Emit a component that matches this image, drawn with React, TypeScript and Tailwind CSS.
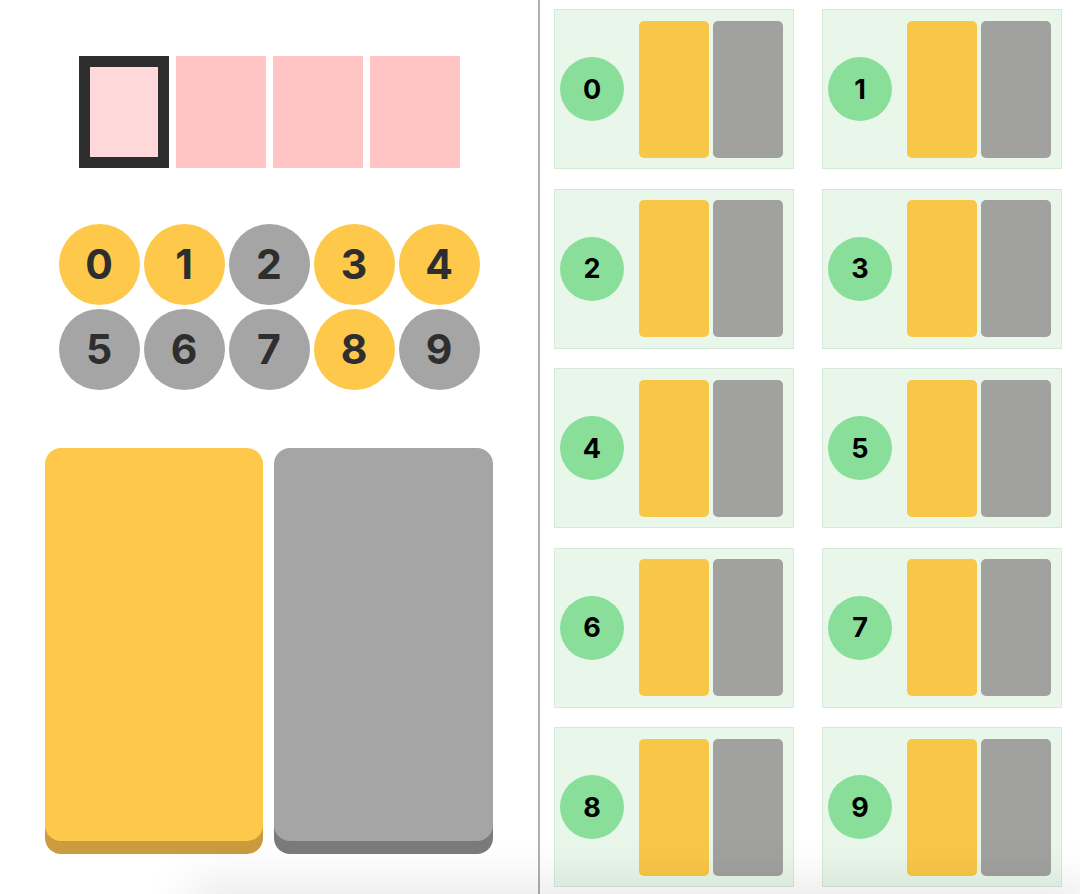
const DIGITS = [0, 1, 2, 3, 4, 5, 6, 7, 8, 9];
const LIT = [0, 1, 3, 4, 8];

function Slots() {
  return (
    <div className="flex gap-[7px]">
      <div className="w-[90px] h-[112px] border-[11px] border-[#2e2e2e] bg-[#ffd9d9]" />
      <div className="w-[90px] h-[112px] bg-[#ffc4c4]" />
      <div className="w-[90px] h-[112px] bg-[#ffc4c4]" />
      <div className="w-[90px] h-[112px] bg-[#ffc4c4]" />
    </div>
  );
}

function DigitPad() {
  return (
    <div className="grid grid-cols-5 gap-[4px]">
      {DIGITS.map((d) => (
        <div
          key={d}
          className={
            "w-[81px] h-[81px] rounded-full flex items-center justify-center text-[41px] font-bold text-[#2e2e2e] leading-none " +
            (LIT.includes(d) ? "bg-[#fec94b]" : "bg-[#a5a5a5]")
          }
        >
          {d}
        </div>
      ))}
    </div>
  );
}

function Levers() {
  return (
    <div className="flex gap-[11px]">
      <div className="w-[218px] h-[393px] rounded-[16px] bg-[#fec94b] shadow-[0_13px_0_#ca9c3f]" />
      <div className="w-[219px] h-[393px] rounded-[16px] bg-[#a5a5a5] shadow-[0_13px_0_#7b7b7b]" />
    </div>
  );
}

function DigitCard({ digit }: { digit: number }) {
  return (
    <div className="w-[240px] h-[160px] border border-[#d5e8d9] bg-[#e8f7ea] flex items-center pl-[5px] pr-[10px]">
      <div className="w-[64px] h-[64px] rounded-full bg-[#89df9a] flex items-center justify-center text-[27px] font-bold text-black leading-none">
        {digit}
      </div>
      <div className="ml-auto flex gap-[4px]">
        <div className="w-[70px] h-[137px] rounded-[5px] bg-[#f9c748]" />
        <div className="w-[70px] h-[137px] rounded-[5px] bg-[#a1a29f]" />
      </div>
    </div>
  );
}

export default function App() {
  return (
    <div className="relative w-[1080px] h-[894px] overflow-hidden bg-white flex font-['Inter','Noto_Sans',sans-serif]">
      <div className="w-[538px] flex flex-col items-center pt-[56px]">
        <Slots />
        <div className="mt-[56px]">
          <DigitPad />
        </div>
        <div className="mt-[58px]">
          <Levers />
        </div>
      </div>
      <div className="w-[2px] bg-[#b0b0b3]" />
      <div className="flex-1 pl-[14px] pt-[9px]">
        <div className="grid grid-cols-[240px_240px] gap-x-[28px] gap-y-[19.5px]">
          {DIGITS.map((d) => (
            <DigitCard key={d} digit={d} />
          ))}
        </div>
      </div>
      <div className="pointer-events-none absolute left-[200px] right-0 top-[894px] h-[40px] shadow-[0_0_50px_12px_rgba(0,0,0,0.09)]" />
    </div>
  );
}
